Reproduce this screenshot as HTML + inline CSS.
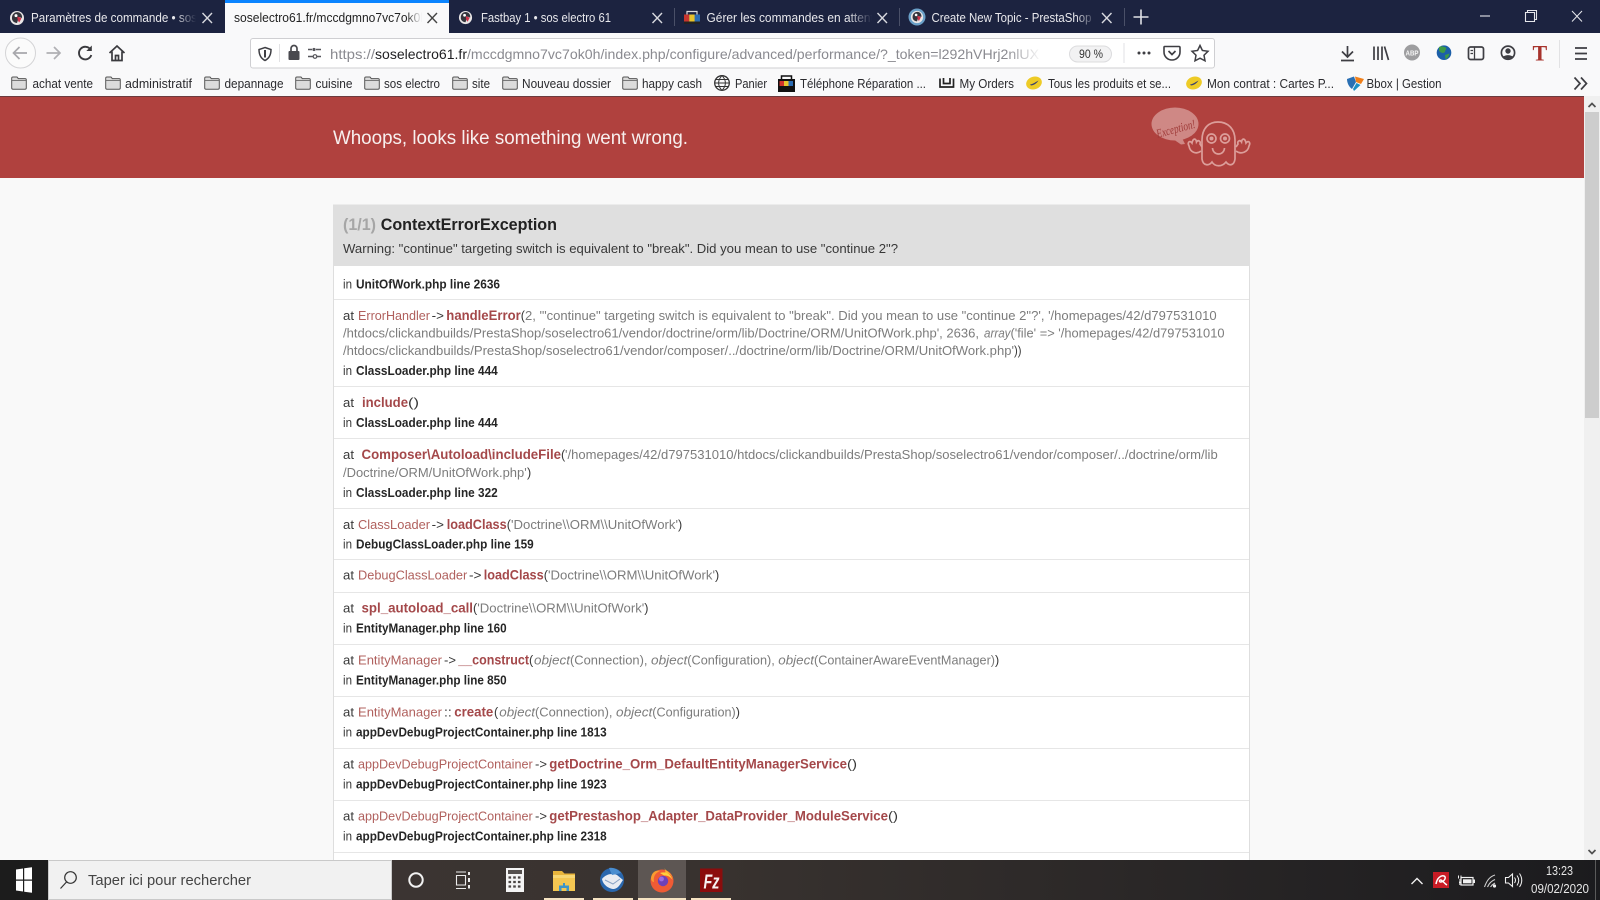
<!DOCTYPE html>
<html lang="fr"><head><meta charset="utf-8"><title>Whoops, looks like something went wrong.</title>
<style>
html,body{margin:0;padding:0;background:#f9f9f9;width:1600px;height:900px;overflow:hidden}
svg{display:block}
text{font-family:"Liberation Sans",sans-serif;white-space:pre}
.n{font-size:12.6px;fill:#383838}
.g{font-size:12.6px;fill:#7c7c7c}
.i{font-size:12.6px;fill:#7c7c7c;font-style:italic}
.c{font-size:12.6px;fill:#b0605d}
.f{font-size:13.4px;fill:#a4484a;font-weight:bold}
.b{font-size:12.6px;fill:#262626;font-weight:bold}
.tab{font-size:13px;fill:#e8e8ec}
.bk{font-size:13px;fill:#2a2a2e}
.url{font-size:14px;fill:#8a8a90}
</style></head><body>
<svg xmlns="http://www.w3.org/2000/svg" width="1600" height="900" viewBox="0 0 1600 900">
<defs>
<linearGradient id="tb" x1="0" x2="1" y1="0" y2="0"><stop offset="0" stop-color="#3f3735"/><stop offset=".45" stop-color="#38322f"/><stop offset="1" stop-color="#1b1b1e"/></linearGradient>
<linearGradient id="fd" x1="0" x2="1" y1="0" y2="0"><stop offset="0" stop-color="#1c2340" stop-opacity="0"/><stop offset="1" stop-color="#1c2340"/></linearGradient>
<linearGradient id="fw" x1="0" x2="1" y1="0" y2="0"><stop offset="0" stop-color="#f9f9fa" stop-opacity="0"/><stop offset="1" stop-color="#f9f9fa"/></linearGradient>
<linearGradient id="fu" x1="0" x2="1" y1="0" y2="0"><stop offset="0" stop-color="#fff" stop-opacity="0"/><stop offset="1" stop-color="#fff"/></linearGradient>
<symbol id="folder" viewBox="0 0 16 14" overflow="visible"><path d="M.7 2.2Q.7 1 2 1H6l1.3 1.6H14q1.3 0 1.3 1.2V12q0 1.2-1.3 1.2H2Q.7 13.2.7 12Z" fill="#dcdcdc" stroke="#555" stroke-width="1"/><path d="M1 4.4H15" stroke="#666" stroke-width=".9"/></symbol>
<symbol id="puffin" viewBox="0 0 16 16" overflow="visible"><circle cx="8" cy="8" r="7" fill="#e9e6e6"/><path d="M3 9C2.5 4 6 1.800 9 2.200 12 2.600 13.500 5.500 13 8L10 7 8 13C5.500 12.800 3.500 11.500 3 9Z" fill="#34343c"/><path d="M8.500 6.500 12.500 8.200 10.200 12.500C8.800 11 8.200 8.500 8.500 6.500Z" fill="#d3324a"/><circle cx="7" cy="5.600" r="1.500" fill="#fff"/></symbol>
<symbol id="poste" viewBox="0 0 16 16" overflow="visible"><ellipse cx="8" cy="8" rx="8" ry="6.300" fill="#eecb26" transform="rotate(-18 8 8)"/><path d="M4 9.500C7 9 9 7.500 12.500 5.500 11 8 8.500 10 5 10.500Z" fill="#3a4070"/></symbol>
</defs>

<!-- tab strip -->
<rect width="1600" height="33" fill="#1c2340"/>
<rect x="225" y="0" width="224" height="33" fill="#f9f9fa"/>
<rect x="225" y="0" width="224" height="3" fill="#0a84ff"/>
<path d="M674.500 8V26M899.500 8V26M1124.500 8V26" stroke="#4a5068"/>
<use href="#puffin" x="9" y="10" width="16" height="16"/>
<text class="tab" x="31" y="22" textLength="166" lengthAdjust="spacingAndGlyphs">Paramètres de commande • sos</text>
<rect x="176" y="8" width="20" height="20" fill="url(#fd)"/><rect x="196" y="8" width="8" height="20" fill="#1c2340"/>
<path d="M202.500 13 212 23M212 13 202.500 23" stroke="#d8d9df" stroke-width="1.400"/>
<text class="tab" x="234" y="22" textLength="193" lengthAdjust="spacingAndGlyphs" style="fill:#222">soselectro61.fr/mccdgmno7vc7ok0h</text>
<rect x="406" y="8" width="16" height="20" fill="url(#fw)"/><rect x="422" y="8" width="6" height="20" fill="#f9f9fa"/>
<path d="M427.500 13 437 23M437 13 427.500 23" stroke="#444" stroke-width="1.400"/>
<use href="#puffin" x="458" y="10" width="15" height="15"/>
<text class="tab" x="481" y="22" textLength="130" lengthAdjust="spacingAndGlyphs">Fastbay 1 • sos electro 61</text>
<path d="M652.500 13 662 23M662 13 652.500 23" stroke="#d8d9df" stroke-width="1.400"/>
<path d="M687 14.500V11.500H697V14.500" fill="none" stroke="#ddd" stroke-width="1.200"/><rect x="684" y="14.500" width="16" height="9.500" fill="#2b6cb3"/><rect x="684" y="14.500" width="5.300" height="9.500" fill="#c8352e"/><rect x="689.300" y="14.500" width="5.300" height="9.500" fill="#e8c32b"/><rect x="684" y="21.500" width="16" height="2.500" fill="#222"/>
<text class="tab" x="706.500" y="22" textLength="174" lengthAdjust="spacingAndGlyphs">Gérer les commandes en attente</text>
<rect x="848" y="8" width="24" height="20" fill="url(#fd)"/><rect x="872" y="8" width="27" height="20" fill="#1c2340"/>
<path d="M877.500 13 887 23M887 13 877.500 23" stroke="#d8d9df" stroke-width="1.400"/>
<circle cx="917" cy="17" r="8.500" fill="#6aa0c8"/><use href="#puffin" x="910" y="10" width="14" height="14"/>
<text class="tab" x="931.500" y="22" textLength="160" lengthAdjust="spacingAndGlyphs">Create New Topic - PrestaShop</text>
<rect x="1076" y="8" width="20" height="20" fill="url(#fd)"/>
<path d="M1102 13 1111.500 23M1111.500 13 1102 23" stroke="#d8d9df" stroke-width="1.400"/>
<path d="M1141 9.500V24.500M1133.500 17H1148.500" stroke="#e0e1e6" stroke-width="1.600"/>
<path d="M1480 16H1490" stroke="#e6e7ec" stroke-width="1.100"/>
<path d="M1525.500 12.500H1534.500V21.500H1525.500ZM1527.500 12.500V10.500H1536.500V19.500H1534.500" fill="none" stroke="#e6e7ec" stroke-width="1.100"/>
<path d="M1572 11 1582 21.500M1582 11 1572 21.500" stroke="#e6e7ec" stroke-width="1"/>

<!-- nav toolbar -->
<rect y="33" width="1600" height="63" fill="#f9f9fa"/>
<circle cx="20.500" cy="53" r="15" fill="#fbfbfb" stroke="#d4d4d6"/>
<path d="M27 53H13.500M19.500 47 13.500 53 19.500 59" fill="none" stroke="#a8a8ac" stroke-width="1.700"/>
<path d="M46.500 53H60M54 47 60 53 54 59" fill="none" stroke="#b0b0b4" stroke-width="1.700"/>
<path d="M90.500 49.500A6.300 6.300 0 1 0 91.300 55" fill="none" stroke="#3a3a3e" stroke-width="1.900"/><path d="M91.800 45.500V51H86.300Z" fill="#3a3a3e"/>
<path d="M109.500 53 117 46 124.500 53M112 51.500V60.500H122V51.500M115.500 60.500V55.500H118.500V60.500" fill="none" stroke="#3a3a3e" stroke-width="1.700"/>
<rect x="250.500" y="38.500" width="964" height="29.500" rx="2.500" fill="#fff" stroke="#cfcfd2"/>
<path d="M265 47.500 271 49.500C271 55 269 58.500 265 60.500 261 58.500 259 55 259 49.500Z" fill="none" stroke="#3f3f44" stroke-width="1.500"/><path d="M265 50V57.500" stroke="#3f3f44" stroke-width="2"/>
<path d="M279.500 44V62" stroke="#e2e2e4"/>
<rect x="288.500" y="51" width="11" height="9" rx="1" fill="#4a4a4f"/><path d="M291 51V48.500A3 3 0 0 1 297 48.500V51" fill="none" stroke="#4a4a4f" stroke-width="1.700"/>
<path d="M308 49.500H312M316 49.500H321M308 56.500H313M317 56.500H321" stroke="#55555a" stroke-width="1.500"/><circle cx="314" cy="49.500" r="1.600" fill="#55555a"/><circle cx="315" cy="56.500" r="1.800" fill="none" stroke="#55555a" stroke-width="1.200"/>
<text class="url" x="330" y="59" textLength="45" lengthAdjust="spacingAndGlyphs">https://</text>
<text class="url" x="375" y="59" textLength="92" lengthAdjust="spacingAndGlyphs" style="fill:#1f1f22">soselectro61.fr</text>
<text class="url" x="467" y="59" textLength="572" lengthAdjust="spacingAndGlyphs">/mccdgmno7vc7ok0h/index.php/configure/advanced/performance/?_token=l292hVHrj2nlUX</text>
<rect x="1006" y="42" width="36" height="22" fill="url(#fu)"/>
<rect x="1042" y="42" width="25" height="22" fill="#fff"/>
<rect x="1069.500" y="46" width="42" height="16" rx="8" fill="#f2f2f3" stroke="#dcdcde"/>
<text x="1079" y="58" font-size="12" fill="#333" textLength="24" lengthAdjust="spacingAndGlyphs">90 %</text>
<path d="M1124 43V63" stroke="#e2e2e4"/>
<circle cx="1139" cy="53" r="1.500" fill="#3e3e43"/><circle cx="1144" cy="53" r="1.500" fill="#3e3e43"/><circle cx="1149" cy="53" r="1.500" fill="#3e3e43"/>
<path d="M1164.500 46.500H1179Q1180 46.500 1180 47.500V52A8 8 0 0 1 1164 52V47.500Q1164 46.500 1164.500 46.500Z" fill="none" stroke="#3e3e43" stroke-width="1.600"/><path d="M1168.500 51 1172 54.500 1175.500 51" fill="none" stroke="#3e3e43" stroke-width="1.700"/>
<path d="M1200 45.500 1202.400 50.500 1208 51.300 1204 55.200 1205 60.800 1200 58.200 1195 60.800 1196 55.200 1192 51.300 1197.600 50.500Z" fill="none" stroke="#3e3e43" stroke-width="1.500"/>
<path d="M1347.500 46V56.500M1342 51.500 1347.500 57 1353 51.500M1341 60.500H1354" fill="none" stroke="#3e3e43" stroke-width="1.700"/>
<path d="M1374 46.500V60M1378 46.500V60M1382 46.500V60M1384.500 46.500 1388.500 60" fill="none" stroke="#3e3e43" stroke-width="1.700"/>
<circle cx="1412" cy="52.500" r="8" fill="#9d9d9f"/><text x="1405.500" y="55.500" font-size="7.500" font-weight="bold" fill="#f4f4f4" textLength="13" lengthAdjust="spacingAndGlyphs">ABP</text>
<circle cx="1444" cy="52.700" r="7.300" fill="#1c5fa8"/><path d="M1439 47C1442 45.500 1444 47 1446 47.500 1447 49 1445 50 1445 52 1443 54 1440 52.500 1439 50.500ZM1445 55 1449.500 53.500C1449 56 1447.500 58.500 1445.500 59.300Z" fill="#3d9a46"/>
<rect x="1468.500" y="47" width="15" height="12.500" rx="2" fill="none" stroke="#3e3e43" stroke-width="1.700"/><path d="M1474.500 47V59.500M1470.500 50.500H1473M1470.500 53.500H1473" stroke="#3e3e43" stroke-width="1.300"/>
<circle cx="1508" cy="52.700" r="6.600" fill="none" stroke="#3e3e43" stroke-width="1.700"/><circle cx="1508" cy="51" r="2.700" fill="#3e3e43"/><path d="M1503 57C1505 54.500 1511 54.500 1513 57L1508 59Z" fill="#3e3e43"/>
<text x="1532.500" y="60.500" font-size="22" font-weight="bold" fill="#a7332c" style="font-family:'Liberation Serif',serif">T</text>
<path d="M1559.500 40V68" stroke="#e2e2e4"/>
<path d="M1575 48H1587M1575 53.500H1587M1575 59H1587" stroke="#3e3e43" stroke-width="1.800"/>

<!-- bookmarks -->
<use href="#folder" x="11" y="76" width="16" height="14"/><text class="bk" x="32.500" y="88" textLength="60.500" lengthAdjust="spacingAndGlyphs">achat vente</text>
<use href="#folder" x="105" y="76" width="16" height="14"/><text class="bk" x="125" y="88" textLength="67" lengthAdjust="spacingAndGlyphs">administratif</text>
<use href="#folder" x="204" y="76" width="16" height="14"/><text class="bk" x="224.500" y="88" textLength="59" lengthAdjust="spacingAndGlyphs">depannage</text>
<use href="#folder" x="295" y="76" width="16" height="14"/><text class="bk" x="315.500" y="88" textLength="37" lengthAdjust="spacingAndGlyphs">cuisine</text>
<use href="#folder" x="364" y="76" width="16" height="14"/><text class="bk" x="384" y="88" textLength="56" lengthAdjust="spacingAndGlyphs">sos electro</text>
<use href="#folder" x="452" y="76" width="16" height="14"/><text class="bk" x="472" y="88" textLength="18" lengthAdjust="spacingAndGlyphs">site</text>
<use href="#folder" x="502" y="76" width="16" height="14"/><text class="bk" x="522" y="88" textLength="89" lengthAdjust="spacingAndGlyphs">Nouveau dossier</text>
<use href="#folder" x="622" y="76" width="16" height="14"/><text class="bk" x="642" y="88" textLength="60" lengthAdjust="spacingAndGlyphs">happy cash</text>
<circle cx="722" cy="83" r="7.300" fill="none" stroke="#333" stroke-width="1.300"/><path d="M714.700 83H729.300M722 75.700C717.500 80 717.500 86 722 90.300 726.500 86 726.500 80 722 75.700ZM715.500 79.500H728.500M715.500 86.500H728.500" fill="none" stroke="#333"/>
<text class="bk" x="735" y="88" textLength="32" lengthAdjust="spacingAndGlyphs">Panier</text>
<path d="M781.500 79V76H791.500V79" fill="none" stroke="#111" stroke-width="1.500"/><rect x="778" y="79" width="17" height="13" fill="#111"/><rect x="779.500" y="81" width="4.500" height="5" fill="#d0332c"/><rect x="784" y="81" width="4.500" height="5" fill="#e9c52c"/><rect x="788.500" y="81" width="4.500" height="5" fill="#2b6cb3"/>
<text class="bk" x="800" y="88" textLength="126" lengthAdjust="spacingAndGlyphs">Téléphone Réparation ...</text>
<path d="M940 78.500V87H953.500V78.500M943.500 78V83.500H950V78" fill="none" stroke="#222" stroke-width="1.700"/>
<text class="bk" x="959.500" y="88" textLength="54.500" lengthAdjust="spacingAndGlyphs">My Orders</text>
<use href="#poste" x="1026" y="75" width="16" height="16"/>
<text class="bk" x="1048" y="88" textLength="123" lengthAdjust="spacingAndGlyphs">Tous les produits et se...</text>
<use href="#poste" x="1186" y="75" width="16" height="16"/>
<text class="bk" x="1207" y="88" textLength="127" lengthAdjust="spacingAndGlyphs">Mon contrat : Cartes P...</text>
<path d="M1347 79 1354 76.500 1356 82 1352 89C1349 87 1347 83 1347 79Z" fill="#2a6fb3"/><path d="M1355 76.500 1364 79 1361 84 1356 82Z" fill="#ef7f1a"/><path d="M1356.500 83 1360.500 85 1354 91 1353 89Z" fill="#1d8fc4"/>
<text class="bk" x="1366.500" y="88" textLength="75" lengthAdjust="spacingAndGlyphs">Bbox | Gestion</text>
<path d="M1574.500 77.500 1580 83.500 1574.500 89.500M1581 77.500 1586.500 83.500 1581 89.500" fill="none" stroke="#3e3e43" stroke-width="1.700"/>

<!-- page -->
<rect y="96" width="1584" height="764" fill="#f9f9f9"/>
<rect y="96" width="1584" height="82" fill="#b0413e"/>
<rect y="96" width="1584" height="1" fill="#6b3b3e"/>
<text x="333" y="144" font-size="19.800" fill="#f7efee" textLength="355" lengthAdjust="spacingAndGlyphs">Whoops, looks like something went wrong.</text>
<!-- ghost -->
<ellipse cx="1175" cy="124" rx="23.500" ry="16.500" fill="#cf8885"/><path d="M1173 139 1181 144.500 1185 144 1181 136Z" fill="#cf8885"/>
<text x="1155" y="133" font-size="12.500" font-style="italic" fill="#a03c3a" transform="rotate(-15 1175 126)" textLength="40" lengthAdjust="spacingAndGlyphs" style="font-family:'Liberation Serif',serif">Exception!</text>
<g fill="none" stroke="#dc9e9a" stroke-width="1.700">
<path d="M1202 159V140C1202 128 1209 122 1218 122 1227 122 1235 128 1235 140V159C1234 166 1229 166 1226 162 1222 167 1215 167 1212 162 1209 166 1203 166 1202 159Z"/>
<circle cx="1211.500" cy="138.500" r="4.500"/><circle cx="1225" cy="138.500" r="4.500"/>
<path d="M1212.500 148C1213 156 1224 156 1224.500 148"/>
<path d="M1201 151C1196 155 1190 152 1189 146 1187 142 1190 140 1192 143 1193 138 1196 138 1196.500 142 1198 139.500 1201 141 1200 144L1202 147"/>
<path d="M1236 151C1241 155 1248 152 1249 146 1251 142 1248 140 1246 143 1245 138 1242 138 1241.500 142 1240 139.500 1237 141 1238 144L1236 147"/>
</g>
<circle cx="1211.500" cy="138.500" r="2" fill="#dc9e9a"/><circle cx="1225" cy="138.500" r="2" fill="#dc9e9a"/>

<!-- exception box -->
<rect x="333.500" y="205" width="916" height="660" fill="#fff" stroke="#dedede"/>
<rect x="333" y="205" width="917" height="61" fill="#dfdfdf"/>
<text x="343" y="230" font-size="16.200" font-weight="bold" fill="#a6a6a6" textLength="33" lengthAdjust="spacingAndGlyphs">(1/1)</text>
<text x="380.700" y="230" font-size="16.200" font-weight="bold" fill="#222" textLength="176.300" lengthAdjust="spacingAndGlyphs">ContextErrorException</text>
<text x="343" y="253.200" class="n" textLength="555" lengthAdjust="spacingAndGlyphs">Warning: "continue" targeting switch is equivalent to "break". Did you mean to use "continue 2"?</text>
<path d="M334 299.500H1249M334 386.500H1249M334 438.500H1249M334 508.500H1249M334 559.500H1249M334 592.500H1249M334 644.500H1249M334 696.500H1249M334 748.500H1249M334 800.500H1249M334 852.500H1249" stroke="#e6e6e6"/>

<text class="n" x="343" y="288.500" textLength="9" lengthAdjust="spacingAndGlyphs">in</text><text class="b" x="356" y="288.500" textLength="144" lengthAdjust="spacingAndGlyphs">UnitOfWork.php line 2636</text>

<text class="n" x="343" y="320" textLength="11" lengthAdjust="spacingAndGlyphs">at</text><text class="c" x="358" y="320" textLength="72" lengthAdjust="spacingAndGlyphs">ErrorHandler</text><text class="n" x="431.700" y="320" textLength="12.300" lengthAdjust="spacingAndGlyphs">-&gt;</text><text class="f" x="446.300" y="320" textLength="74.400" lengthAdjust="spacingAndGlyphs">handleError</text><text class="n" x="520.700" y="320">(</text><text class="g" x="525" y="320" textLength="691.700" lengthAdjust="spacingAndGlyphs">2, '"continue" targeting switch is equivalent to "break". Did you mean to use "continue 2"?', '/homepages/42/d797531010</text>
<text class="g" x="343" y="337.700" textLength="636" lengthAdjust="spacingAndGlyphs">/htdocs/clickandbuilds/PrestaShop/soselectro61/vendor/doctrine/orm/lib/Doctrine/ORM/UnitOfWork.php', 2636,</text><text class="i" x="984" y="337.700" textLength="26.500" lengthAdjust="spacingAndGlyphs">array</text><text class="g" x="1010.500" y="337.700" textLength="214" lengthAdjust="spacingAndGlyphs">('file' =&gt; '/homepages/42/d797531010</text>
<text class="g" x="343" y="355" textLength="671" lengthAdjust="spacingAndGlyphs">/htdocs/clickandbuilds/PrestaShop/soselectro61/vendor/composer/../doctrine/orm/lib/Doctrine/ORM/UnitOfWork.php'</text><text class="n" x="1014" y="355" textLength="7.500" lengthAdjust="spacingAndGlyphs">))</text>
<text class="n" x="343" y="375" textLength="9" lengthAdjust="spacingAndGlyphs">in</text><text class="b" x="356" y="375" textLength="141.700" lengthAdjust="spacingAndGlyphs">ClassLoader.php line 444</text>

<text class="n" x="343" y="407" textLength="11" lengthAdjust="spacingAndGlyphs">at</text><text class="f" x="362" y="407" textLength="46" lengthAdjust="spacingAndGlyphs">include</text><text class="n" x="408" y="407" textLength="11" lengthAdjust="spacingAndGlyphs">()</text>
<text class="n" x="343" y="427" textLength="9" lengthAdjust="spacingAndGlyphs">in</text><text class="b" x="356" y="427" textLength="141.700" lengthAdjust="spacingAndGlyphs">ClassLoader.php line 444</text>

<text class="n" x="343" y="459" textLength="11" lengthAdjust="spacingAndGlyphs">at</text><text class="f" x="361.500" y="459" textLength="199.500" lengthAdjust="spacingAndGlyphs">Composer\Autoload\includeFile</text><text class="n" x="561" y="459">(</text><text class="g" x="565" y="459" textLength="652.700" lengthAdjust="spacingAndGlyphs">'/homepages/42/d797531010/htdocs/clickandbuilds/PrestaShop/soselectro61/vendor/composer/../doctrine/orm/lib</text>
<text class="g" x="343" y="477" textLength="183.700" lengthAdjust="spacingAndGlyphs">/Doctrine/ORM/UnitOfWork.php'</text><text class="n" x="527" y="477">)</text>
<text class="n" x="343" y="497" textLength="9" lengthAdjust="spacingAndGlyphs">in</text><text class="b" x="356" y="497" textLength="141.700" lengthAdjust="spacingAndGlyphs">ClassLoader.php line 322</text>

<g transform="translate(0,-1)">
<text class="n" x="343" y="530" textLength="11" lengthAdjust="spacingAndGlyphs">at</text><text class="c" x="358" y="530" textLength="72" lengthAdjust="spacingAndGlyphs">ClassLoader</text><text class="n" x="431.700" y="530" textLength="12.300" lengthAdjust="spacingAndGlyphs">-&gt;</text><text class="f" x="446.700" y="530" textLength="60" lengthAdjust="spacingAndGlyphs">loadClass</text><text class="n" x="506.700" y="530">(</text><text class="g" x="511" y="530" textLength="167" lengthAdjust="spacingAndGlyphs">'Doctrine\\ORM\\UnitOfWork'</text><text class="n" x="678" y="530">)</text>
<text class="n" x="343" y="549.300" textLength="9" lengthAdjust="spacingAndGlyphs">in</text><text class="b" x="356" y="549.300" textLength="177.700" lengthAdjust="spacingAndGlyphs">DebugClassLoader.php line 159</text>

<text class="n" x="343" y="580.300" textLength="11" lengthAdjust="spacingAndGlyphs">at</text><text class="c" x="358" y="580.300" textLength="109.300" lengthAdjust="spacingAndGlyphs">DebugClassLoader</text><text class="n" x="469" y="580.300" textLength="12.500" lengthAdjust="spacingAndGlyphs">-&gt;</text><text class="f" x="483.700" y="580.300" textLength="60" lengthAdjust="spacingAndGlyphs">loadClass</text><text class="n" x="543.700" y="580.300">(</text><text class="g" x="548" y="580.300" textLength="167" lengthAdjust="spacingAndGlyphs">'Doctrine\\ORM\\UnitOfWork'</text><text class="n" x="715" y="580.300">)</text>

<text class="n" x="343" y="613.300" textLength="11" lengthAdjust="spacingAndGlyphs">at</text><text class="f" x="361.500" y="613.300" textLength="111.500" lengthAdjust="spacingAndGlyphs">spl_autoload_call</text><text class="n" x="473" y="613.300">(</text><text class="g" x="477.300" y="613.300" textLength="167" lengthAdjust="spacingAndGlyphs">'Doctrine\\ORM\\UnitOfWork'</text><text class="n" x="644.300" y="613.300">)</text>
<text class="n" x="343" y="633.300" textLength="9" lengthAdjust="spacingAndGlyphs">in</text><text class="b" x="356" y="633.300" textLength="150.700" lengthAdjust="spacingAndGlyphs">EntityManager.php line 160</text>

<text class="n" x="343" y="665.300" textLength="11" lengthAdjust="spacingAndGlyphs">at</text><text class="c" x="358" y="665.300" textLength="84" lengthAdjust="spacingAndGlyphs">EntityManager</text><text class="n" x="444" y="665.300" textLength="12" lengthAdjust="spacingAndGlyphs">-&gt;</text><text class="f" x="458.300" y="665.300" textLength="70.700" lengthAdjust="spacingAndGlyphs">__construct</text><text class="n" x="529" y="665.300">(</text><text class="i" x="534" y="665.300" textLength="36" lengthAdjust="spacingAndGlyphs">object</text><text class="g" x="570" y="665.300" textLength="77.500" lengthAdjust="spacingAndGlyphs">(Connection),</text><text class="i" x="651" y="665.300" textLength="36.300" lengthAdjust="spacingAndGlyphs">object</text><text class="g" x="687.300" y="665.300" textLength="87.500" lengthAdjust="spacingAndGlyphs">(Configuration),</text><text class="i" x="778.300" y="665.300" textLength="35.700" lengthAdjust="spacingAndGlyphs">object</text><text class="g" x="814" y="665.300" textLength="181" lengthAdjust="spacingAndGlyphs">(ContainerAwareEventManager)</text><text class="n" x="995" y="665.300">)</text>
<text class="n" x="343" y="685.300" textLength="9" lengthAdjust="spacingAndGlyphs">in</text><text class="b" x="356" y="685.300" textLength="150.700" lengthAdjust="spacingAndGlyphs">EntityManager.php line 850</text>

<text class="n" x="343" y="717.300" textLength="11" lengthAdjust="spacingAndGlyphs">at</text><text class="c" x="358" y="717.300" textLength="84" lengthAdjust="spacingAndGlyphs">EntityManager</text><text class="n" x="444" y="717.300" textLength="7.700" lengthAdjust="spacingAndGlyphs">::</text><text class="f" x="454.300" y="717.300" textLength="39" lengthAdjust="spacingAndGlyphs">create</text><text class="n" x="494" y="717.300">(</text><text class="i" x="499.300" y="717.300" textLength="35.700" lengthAdjust="spacingAndGlyphs">object</text><text class="g" x="535" y="717.300" textLength="77.500" lengthAdjust="spacingAndGlyphs">(Connection),</text><text class="i" x="616" y="717.300" textLength="36.300" lengthAdjust="spacingAndGlyphs">object</text><text class="g" x="652.300" y="717.300" textLength="83.400" lengthAdjust="spacingAndGlyphs">(Configuration)</text><text class="n" x="735.700" y="717.300">)</text>
<text class="n" x="343" y="737.300" textLength="9" lengthAdjust="spacingAndGlyphs">in</text><text class="b" x="356" y="737.300" textLength="250.700" lengthAdjust="spacingAndGlyphs">appDevDebugProjectContainer.php line 1813</text>

<text class="n" x="343" y="769.300" textLength="11" lengthAdjust="spacingAndGlyphs">at</text><text class="c" x="358" y="769.300" textLength="174.700" lengthAdjust="spacingAndGlyphs">appDevDebugProjectContainer</text><text class="n" x="535" y="769.300" textLength="12" lengthAdjust="spacingAndGlyphs">-&gt;</text><text class="f" x="549.300" y="769.300" textLength="297.700" lengthAdjust="spacingAndGlyphs">getDoctrine_Orm_DefaultEntityManagerService</text><text class="n" x="847" y="769.300" textLength="10" lengthAdjust="spacingAndGlyphs">()</text>
<text class="n" x="343" y="789.300" textLength="9" lengthAdjust="spacingAndGlyphs">in</text><text class="b" x="356" y="789.300" textLength="250.700" lengthAdjust="spacingAndGlyphs">appDevDebugProjectContainer.php line 1923</text>

<text class="n" x="343" y="821.300" textLength="11" lengthAdjust="spacingAndGlyphs">at</text><text class="c" x="358" y="821.300" textLength="174.700" lengthAdjust="spacingAndGlyphs">appDevDebugProjectContainer</text><text class="n" x="535" y="821.300" textLength="12" lengthAdjust="spacingAndGlyphs">-&gt;</text><text class="f" x="549.300" y="821.300" textLength="338.700" lengthAdjust="spacingAndGlyphs">getPrestashop_Adapter_DataProvider_ModuleService</text><text class="n" x="888" y="821.300" textLength="10" lengthAdjust="spacingAndGlyphs">()</text>
<text class="n" x="343" y="841.300" textLength="9" lengthAdjust="spacingAndGlyphs">in</text><text class="b" x="356" y="841.300" textLength="250.700" lengthAdjust="spacingAndGlyphs">appDevDebugProjectContainer.php line 2318</text>
</g>

<!-- scrollbar -->
<rect x="1584" y="96" width="16" height="764" fill="#f0f0f0"/>
<rect x="1585" y="112" width="14" height="306" fill="#cdcdcd"/>
<path d="M1588.500 107 1592 103.500 1595.500 107M1588.500 850 1592 853.500 1595.500 850" fill="none" stroke="#505050" stroke-width="1.700"/>

<!-- taskbar -->
<rect y="860" width="1600" height="40" fill="url(#tb)"/>
<rect width="48" y="860" height="40" fill="#1c1c1c"/>
<path d="M16 869.500 23 868.500V879.500H16ZM24.200 868.300 32 867.200V879.500H24.200ZM16 880.700H23V891.500L16 890.500ZM24.200 880.700H32V892.800L24.200 891.700Z" fill="#fff"/>
<rect x="48" y="860" width="344" height="40" fill="#f1f1f1"/>
<rect x="48.500" y="860.500" width="343" height="39" fill="none" stroke="#c9c9c9"/>
<circle cx="70.500" cy="877.500" r="5.800" fill="none" stroke="#333" stroke-width="1.200"/><path d="M66.500 882 60.500 888.500" stroke="#333" stroke-width="1.200"/>
<text x="88" y="885" font-size="15" fill="#444" textLength="163" lengthAdjust="spacingAndGlyphs">Taper ici pour rechercher</text>
<circle cx="416" cy="880" r="6.700" fill="none" stroke="#f2f2f2" stroke-width="2"/>
<path d="M456 872H466M456 888.500H466M456.500 875.500H465.500V885H456.500Z" fill="none" stroke="#ececec" stroke-width="1.100"/><path d="M469 872V875M469 878V882M469 885V888.500" stroke="#ececec" stroke-width="2"/>
<rect x="506" y="868" width="18" height="24" fill="#f4f4f4"/><rect x="508" y="870" width="14" height="4" fill="#55504e"/>
<path d="M508.500 877.500H521.500M508.500 882H521.500M508.500 886.500H521.500" stroke="#4a4543" stroke-width="2.300" stroke-dasharray="2.600 2.100"/>
<path d="M553 871H562L564.500 873.500H575V891H553Z" fill="#e8b53c"/><rect x="553" y="875" width="22" height="3" fill="#f7d774"/><rect x="553" y="878" width="22" height="13" fill="#f4c752"/><path d="M559 891V885.500H563V883H565V885.500H569V891H566.500V888H561.500V891Z" fill="#3d95c9"/>
<circle cx="612" cy="880" r="12" fill="#2a67ad"/><path d="M602 879C606 874 612 873 617 875L623 880C620 884 619 888 614 889 609 889 603 885 602 879Z" fill="#e9ecf2"/><path d="M605 880 613 884 620 879" fill="none" stroke="#8aa3c4"/><path d="M609 868C612 867 618 869 621 873L612 875Z" fill="#4a8ed0"/>
<rect x="638" y="860" width="48" height="40" fill="#5d5653"/>
<circle cx="662" cy="881" r="11.500" fill="#ef5b35"/><path d="M664 868C666 871 672 873 673.500 880 672 875 669 873 665 873 666 871 665 869.500 664 868Z" fill="#fbb92f"/><path d="M651 878C652 871 657 870 660 871 655 873 653 877 654 882 652 882 651 880 651 878Z" fill="#fa9a30"/><circle cx="663" cy="881" r="5.200" fill="#6e41b8"/><circle cx="661.500" cy="879" r="2.400" fill="#9d6de0"/><path d="M660 873C666 871 671 874 672.500 880 670 876 667 875.500 664 875.500Z" fill="#ffcf3b"/>
<rect x="700" y="868.500" width="22.500" height="23.500" fill="#8b0c0c"/><text x="703.500" y="888.500" font-size="20" font-weight="bold" font-style="italic" fill="#f7f1f1" textLength="16" lengthAdjust="spacingAndGlyphs">Fz</text>
<rect x="544" y="898" width="40" height="2" fill="#f5e3c2"/><rect x="593" y="898" width="40" height="2" fill="#f5e3c2"/><rect x="638" y="898" width="48" height="2" fill="#f5e3c2"/><rect x="691" y="898" width="40" height="2" fill="#f5e3c2"/>

<!-- tray -->
<path d="M1411.500 884 1417 878.500 1422.500 884" fill="none" stroke="#f0f0f0" stroke-width="1.400"/>
<rect x="1433" y="872" width="16" height="16" fill="#c81c25"/><path d="M1436 884C1437 878 1441 875 1444 876 1446.500 877 1445 881 1441 882 1439 882.500 1439 879.500 1441 880 1443 881 1445 884 1447 885" fill="none" stroke="#fff" stroke-width="1.500"/>
<rect x="1461" y="877.500" width="12" height="7.500" fill="none" stroke="#f1f1f1" stroke-width="1.200"/><rect x="1463" y="879.300" width="8.500" height="4" fill="#f1f1f1"/><rect x="1473.500" y="879.500" width="1.500" height="3.500" fill="#f1f1f1"/><path d="M1459 880H1461M1459 882.500H1461" stroke="#f1f1f1"/><path d="M1458.500 875.500V878.500M1461 875.500V878.500" stroke="#f1f1f1"/><path d="M1459.800 881V885" stroke="#f1f1f1"/>
<path d="M1484.500 887C1487 880 1490 876.500 1495 875M1487.500 887C1489 883.500 1491 881 1495 879.500M1490.500 887C1491.500 885.500 1493 884 1495 883" fill="none" stroke="#cfcfcf" stroke-width="1.100"/><circle cx="1494.500" cy="886" r="1.600" fill="#f1f1f1"/>
<path d="M1505.500 877.500H1508.500L1512.500 874V886.500L1508.500 883H1505.500Z" fill="none" stroke="#f1f1f1" stroke-width="1.100"/><path d="M1514.500 877.500Q1516.500 880.300 1514.500 883M1517 875.500Q1520.500 880.300 1517 885.500M1519.500 873.500Q1524 880.300 1519.500 887" fill="none" stroke="#f1f1f1"/>
<text x="1546" y="875" font-size="12.500" fill="#e6e6e6" textLength="27" lengthAdjust="spacingAndGlyphs">13:23</text>
<text x="1531" y="893" font-size="12.500" fill="#e6e6e6" textLength="58" lengthAdjust="spacingAndGlyphs">09/02/2020</text>
<path d="M1595.500 860V900" stroke="#5a5a5a"/>
</svg>
</body></html>
